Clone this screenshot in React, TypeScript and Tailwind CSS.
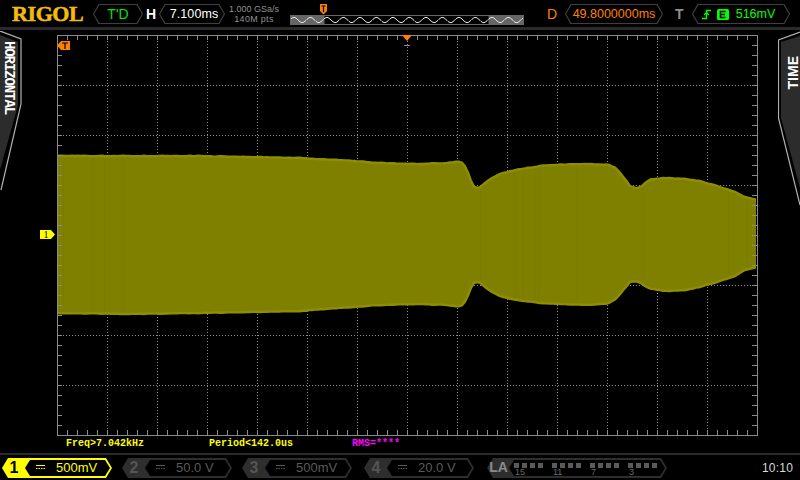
import React from "react";

const TOP: [number, number][] = [[57,156],[130,156],[200,156],[250,157],[300,158],[340,160],[380,163],[420,164],[445,163],[458,161.5],[463,163],[467,170],[473,186],[476,188],[480,187],[490,179],[500,174],[510,171],[525,168.5],[540,166],[560,164.5],[590,164],[608,164.5],[616,168],[624,178],[630,186],[636,188],[641,187],[646,182],[652,179],[665,178],[685,179],[700,181],[720,187],[735,192],[745,197],[757,200]];
const BOT: [number, number][] = [[57,313],[130,314],[200,313],[250,312],[300,311],[340,308],[380,305],[420,304],[445,305],[458,306.5],[463,305],[467,298],[473,283],[476,282],[480,283],[490,291],[500,296],[510,299],[525,301],[540,303],[560,304],[590,305],[608,303.5],[616,299],[624,289],[630,282],[636,281.5],[641,283],[646,287],[652,289],[665,291],[685,290],[700,287],[720,281],[735,276],[745,270],[757,267]];

function at(pts: [number, number][], x: number) {
  for (let i = 1; i < pts.length; i++) {
    if (x <= pts[i][0]) {
      const [a, b] = pts[i - 1];
      const [c, d] = pts[i];
      return b + ((d - b) * (x - a)) / (c - a);
    }
  }
  return pts[pts.length - 1][1];
}

function buildEnvelope() {
  let top = "";
  let bot = "";
  for (let x = 57; x <= 757; x += 3) {
    const n = Math.sin(x * 12.9898) * 43758.5453;
    const j = (n - Math.floor(n)) * 0.5 - 0.25;
    top += `${x},${(at(TOP, x) + j).toFixed(1)} `;
    bot = `${x},${(at(BOT, x) - j).toFixed(1)} ` + bot;
  }
  return { top: top.trim(), bot: bot.trim() };
}

const env = buildEnvelope();
const range = (n: number) => Array.from({ length: n }, (_, i) => i);

function Scope() {
  const L = 57, R = 757, T = 35, B = 435;
  const grid = "#8a8a8a";
  return (
    <svg width={701} height={401} viewBox="57 35 701 401" className="block">
      {range(13).map((i) => (
        <line key={i} x1={L + 50 * (i + 1) + 0.5} x2={L + 50 * (i + 1) + 0.5} y1={T} y2={B} stroke="#8c8c8c" strokeDasharray="1 2" shapeRendering="crispEdges" />
      ))}
      {range(7).map((i) => (
        <line key={i} y1={T + 50 * (i + 1) + 0.5} y2={T + 50 * (i + 1) + 0.5} x1={L} x2={R} stroke="#8c8c8c" strokeDasharray="1 2" shapeRendering="crispEdges" />
      ))}
      <polygon points={`${env.top} ${env.bot}`} fill="#808000" />
      {[63, 93, 104, 122, 480, 514, 523, 534, 538, 577, 642, 728, 747].map((x) => (
        <line key={x} x1={x + 0.5} x2={x + 0.5} y1={at(TOP, x) + 2} y2={at(BOT, x) - 2} stroke="#7b7b00" strokeWidth={1} shapeRendering="crispEdges" />
      ))}
      <polyline points={env.top} fill="none" stroke="#8e8e00" strokeWidth={2.4} />
      <polyline points={env.bot} fill="none" stroke="#8e8e00" strokeWidth={2.4} />
      <g shapeRendering="crispEdges">
        <rect x={L + 0.5} y={T + 0.5} width={700} height={400} fill="none" stroke={grid} />
        {range(69).map((i) => {
          const x = L + 10 * (i + 1) + 0.5;
          return (
            <g key={i} stroke={grid}>
              <line x1={x} x2={x} y1={T} y2={T + 5} />
              <line x1={x} x2={x} y1={B} y2={B - 5} />
            </g>
          );
        })}
        {range(39).map((i) => {
          const y = T + 10 * (i + 1) + 0.5;
          return (
            <g key={i} stroke={grid}>
              <line y1={y} y2={y} x1={L} x2={L + 5} />
              <line y1={y} y2={y} x1={R} x2={R - 5} />
            </g>
          );
        })}
      </g>
    </svg>
  );
}

function Pill({ w, children, className }: { w: number; children: React.ReactNode; className?: string }) {
  return (
    <div className={`relative h-[20px] flex items-center justify-center ${className ?? ""}`} style={{ width: w }}>
      <svg width={w} height={20} className="absolute inset-0">
        <polygon points={`0.5,10 6,0.5 ${w - 6},0.5 ${w - 0.5},10 ${w - 6},19.5 6,19.5`} fill="none" stroke="#404040" strokeWidth={1.2} />
      </svg>
      <div className="relative flex items-center">{children}</div>
    </div>
  );
}

function Timeline() {
  let d = "";
  for (let x = 1; x <= 233; x++) {
    const y = 5 + 2.6 * Math.sin(((x - 1) / 16.5) * Math.PI * 2 + 3.6);
    d += `${x},${y.toFixed(1)} `;
  }
  return (
    <div className="relative w-[234px] h-[10px]">
      <svg width={234} height={10} className="block">
        <rect width={234} height={10} fill="#666666" />
        <rect x={34} y={0.5} width={165} height={9} fill="#000000" stroke="#666666" />
        <polyline points={d} fill="none" stroke="#e8e8e8" strokeWidth={1} />
      </svg>
      <svg width={8} height={11} viewBox="0 0 8 11" className="absolute left-[30px] top-[-11px]">
        <polygon points="0,0 7,0 7,7 3.5,10.5 0,7" fill="#ff8000" />
        <path d="M1.5 2H5.5M3.5 2V8" stroke="#000" strokeWidth={1.2} fill="none" />
      </svg>
    </div>
  );
}

function Dc({ color }: { color: string }) {
  return (
    <svg width={9} height={5} className="block">
      <line x1={0} x2={9} y1={0.5} y2={0.5} stroke={color} />
      <line x1={0} x2={9} y1={3.5} y2={3.5} stroke={color} strokeDasharray="1.5 1" />
    </svg>
  );
}

function Chip({ n, v, active, className }: { n: string; v: string; active?: boolean; className?: string }) {
  const outer = active ? "#ffff00" : "#2e2e2e";
  return (
    <div className={`relative w-[110px] h-[20px] flex items-center ${className ?? ""}`}>
      <svg width={110} height={20} className="absolute inset-0">
        <polygon points="0,10 6,0 104,0 110,10 104,20 6,20" fill={outer} />
        <polygon points="23,10 28,2 103,2 108,10 103,18 28,18" fill="#000000" />
      </svg>
      <span className={`relative w-[24px] text-center font-bold text-[16px] leading-[20px] ${active ? "text-black" : "text-[#555555]"}`}>{n}</span>
      <span className="relative ml-[10px]"><Dc color={active ? "#ffff00" : "#555555"} /></span>
      <span className={`relative ml-[11px] text-[13px] leading-[20px] ${active ? "text-[#ffff00]" : "text-[#5a5a5a]"}`}>{v}</span>
    </div>
  );
}

function La() {
  const groups = [0, 38, 76, 114];
  const labels = ["15", "11", "7", "3"];
  return (
    <div className="relative w-[180px] h-[20px] ml-[13px] flex items-center">
      <svg width={180} height={20} className="absolute inset-0">
        <polygon points="0,10 6,0 174,0 180,10 174,20 6,20" fill="#2e2e2e" />
        <polygon points="22,10 27,2 173,2 178,10 173,18 27,18" fill="#000000" />
        {groups.map((g) =>
          [0, 8, 16, 24].map((o) => <rect key={g + o} x={27 + g + o} y={5} width={5} height={5} fill="#5a5a5a" />)
        )}
      </svg>
      <span className="relative w-[24px] text-center font-bold text-[14px] text-[#8a8a8a]">LA</span>
      <div className="relative flex ml-[5px] mt-[9px]">
        {labels.map((l) => (
          <span key={l} className="w-[38px] text-[9px] leading-[10px] text-[#6a6a6a]">{l}</span>
        ))}
      </div>
    </div>
  );
}

export default function App() {
  return (
    <div className="w-[800px] h-[480px] bg-black overflow-hidden flex flex-col font-['Liberation_Sans',sans-serif]">
      <header className="h-[27px] flex items-center pt-px">
        <div className="w-[93px] pl-[12px] font-['Liberation_Serif',serif] font-bold text-[22px] leading-[24px] tracking-[-0.4px] text-[#f2bc0c] [-webkit-text-stroke:0.5px_#f2bc0c] whitespace-nowrap">RIGOL</div>
        <Pill w={50}><span className="text-[14px] text-[#00e800]">T'D</span></Pill>
        <span className="w-[16px] text-center font-bold text-[14px] text-white">H</span>
        <Pill w={66} className="pl-[4px]"><span className="text-[12.5px] text-white tracking-[0.1px]">7.100ms</span></Pill>
        <div className="w-[56px] ml-[1px] text-center text-[9px] leading-[10px] text-[#909090]">
          <div>1.000 GSa/s</div>
          <div className="tracking-[0.3px]">140M pts</div>
        </div>
        <div className="ml-[8px] mt-[11px]"><Timeline /></div>
        <span className="ml-[23px] w-[18px] text-[14px] text-[#ff8000]">D</span>
        <Pill w={98}><span className="text-[12.5px] text-[#ff8000]">49.8000000ms</span></Pill>
        <span className="ml-[12px] w-[17px] text-[14px] font-bold text-[#909090]">T</span>
        <Pill w={98} className="pr-[5px]">
          <svg width={9} height={11} viewBox="0 0 9 11" className="mr-[6px]">
            <path d="M0 9.5H4.5V1.5H9M2 6L4.5 3.5L7 6" fill="none" stroke="#00ff00" strokeWidth={1.3} />
          </svg>
          <svg width={12} height={11} viewBox="0 0 12 11" className="mr-[7px]">
            <rect width={12} height={11} rx={1.5} fill="#00ff00" />
            <path d="M8.5 2.5H3.5V8.5H8.5M3.5 5.5H8" stroke="#000" strokeWidth={1.5} fill="none" />
          </svg>
          <span className="text-[12.5px] text-[#00ff00]">516mV</span>
        </Pill>
      </header>
      <div className="h-[3px] bg-[#2a2a2a]" />
      <main className="relative flex flex-1">
        <div className="relative w-[57px]">
          <svg width={24} height={165} viewBox="0 31 24 165" className="absolute left-0 top-px">
            <polygon points="0,35 18,42 18,105 0,170" fill="#2c2c2c" />
            <polyline points="0,31 21,39 21,104 1,190" fill="none" stroke="#b0b0b0" strokeWidth={1.2} />
          </svg>
          <span className="absolute left-[2px] top-[11px] font-['Liberation_Mono',monospace] font-bold text-[14px] leading-[14px] tracking-[-1.1px] text-white [writing-mode:vertical-rl]">HORIZONTAL</span>
          <svg width={15} height={9} viewBox="0 0 15 9" className="absolute left-[40px] top-[200px]">
            <polygon points="0,0 11,0 15,4.5 11,9 0,9" fill="#ffff00" />
          </svg>
          <span className="absolute left-[41px] top-[199px] w-[10px] text-center font-['Liberation_Serif',serif] text-[10px] leading-[11px] text-black">1</span>
        </div>
        <div className="relative mt-[5px] h-[401px]">
          <Scope />
          <div className="absolute left-0 top-[6px] flex items-center">
            <svg width={13} height={9} viewBox="0 0 13 9">
              <polygon points="0,4.5 4,0 13,0 13,9 4,9" fill="#ff8000" />
              <path d="M5 2H11M8 2V8" stroke="#000" strokeWidth={1.2} fill="none" />
            </svg>
          </div>
          <svg width={11} height={12} viewBox="0 0 11 12" className="absolute left-[345px] top-0">
            <polygon points="0,0 10,0 5,6" fill="#ff8000" />
            <line x1={2} x2={8} y1={10.5} y2={10.5} stroke="#8c8c8c" />
          </svg>
        </div>
        <div className="relative flex-1">
          <svg width={22} height={176} viewBox="778 31 22 176" className="absolute right-0 top-px">
            <polygon points="800,36 781,42 781,118 800,188" fill="#2c2c2c" />
            <polyline points="800,32 778.5,40 778.5,118 800,205" fill="none" stroke="#b0b0b0" strokeWidth={1.2} />
          </svg>
          <span className="absolute left-[28px] top-[26px] font-bold text-[14px] leading-[14px] text-white [writing-mode:vertical-rl] rotate-180">TIME</span>
        </div>
      </main>
      <div className="h-[16px] flex items-center pl-[66px] font-['Liberation_Mono',monospace] font-bold text-[10px] leading-[16px] text-[#ffff00]">
        <span className="w-[143px]">Freq&gt;7.042kHz</span>
        <span className="w-[143px]">Period&lt;142.0us</span>
        <span className="text-[#ff00ff]">RMS=****</span>
      </div>
      <div className="h-[2px] mt-[1px] bg-[#2a2a2a]" />
      <footer className="flex-1 flex items-center pl-[2px]">
        <Chip n="1" v="500mV" active />
        <Chip n="2" v="50.0 V" className="ml-[10px]" />
        <Chip n="3" v="500mV" className="ml-[10px]" />
        <Chip n="4" v="20.0 V" className="ml-[12px]" />
        <La />
        <span className="ml-[95px] text-[12px] tracking-[0.2px] text-[#d8d8d8]">10:10</span>
      </footer>
    </div>
  );
}
